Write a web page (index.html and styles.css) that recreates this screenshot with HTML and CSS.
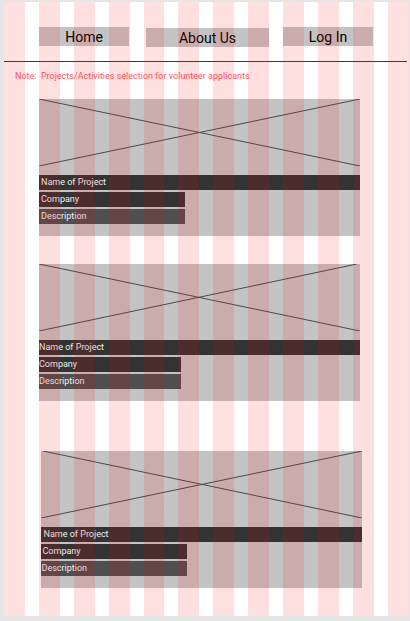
FILE: index.html
```
<!DOCTYPE html>
<html lang="en">
<head>
  <meta charset="UTF-8">
  <meta name="viewport" content="width=device-width, initial-scale=1.0">
  <title>Volunteer Projects - Wireframe</title>
  <link rel="stylesheet" href="styles.css">
</head>
<body>

<div class="frame">
  <nav class="nav">
    <a href="#" class="nav-btn">Home</a>
    <a href="#" class="nav-btn nav-about">About Us</a>
    <a href="#" class="nav-btn nav-login">Log In</a>
  </nav>

  <div class="rule"></div>

  <p class="note">Note:&nbsp; Projects/Activities selection for volunteer applicants</p>

  <div class="card card-1">
    <svg class="placeholder" viewBox="0 0 100 100" preserveAspectRatio="none">
      <line x1="0" y1="0" x2="100" y2="100" vector-effect="non-scaling-stroke"/>
      <line x1="0" y1="100" x2="100" y2="0" vector-effect="non-scaling-stroke"/>
    </svg>
    <div class="bar bar-name">Name of Project</div>
    <div class="bar bar-small">Company</div>
    <div class="bar bar-small bar-desc">Description</div>
  </div>

  <div class="card card-2">
    <svg class="placeholder" viewBox="0 0 100 100" preserveAspectRatio="none">
      <line x1="0" y1="0" x2="100" y2="100" vector-effect="non-scaling-stroke"/>
      <line x1="0" y1="100" x2="99" y2="0" vector-effect="non-scaling-stroke"/>
    </svg>
    <div class="bar bar-name">Name of Project</div>
    <div class="bar bar-small">Company</div>
    <div class="bar bar-small bar-desc">Description</div>
  </div>

  <div class="card card-3">
    <svg class="placeholder" viewBox="0 0 100 100" preserveAspectRatio="none">
      <line x1="0.6" y1="0" x2="100" y2="100" vector-effect="non-scaling-stroke"/>
      <line x1="0" y1="100" x2="100" y2="0" vector-effect="non-scaling-stroke"/>
    </svg>
    <div class="bar bar-name">Name of Project</div>
    <div class="bar bar-small">Company</div>
    <div class="bar bar-small bar-desc">Description</div>
  </div>
</div>

</body>
</html>
```

FILE: styles.css
```
:root {
  --page-bg: #e5e5e5;
  --grid-col: rgba(255, 0, 0, 0.12);
  --box-bg: #c4c4c4;
  --bar-dark: #333333;
  --bar-mid: #4f4f4f;
  --note-color: #ff5c5c;
}
* { margin: 0; padding: 0; box-sizing: border-box; }
body {
  background: var(--page-bg);
  font-family: 'Roboto', 'Liberation Sans', sans-serif;
  width: 410px;
  height: 621px;
  overflow: hidden;
}

/* artboard + column grid overlay */
.frame {
  position: relative;
  width: 405px;
  height: 614px;
  margin: 2px 0 0 4px;
  background: #fff;
  overflow: hidden;
}
.frame::after {
  content: '';
  position: absolute;
  inset: 0;
  pointer-events: none;
  background: repeating-linear-gradient(to right, var(--grid-col) 0 20.8px, transparent 20.8px 34.9px);
}

.nav { display: flex; align-items: flex-start; margin-top: 25px; padding-left: 35px; height: 20px; }
.nav-btn {
  display: flex;
  align-items: center;
  justify-content: center;
  width: 90px;
  height: 19px;
  background: var(--box-bg);
  color: #000;
  text-decoration: none;
  font-size: 14px;
}
.nav-about { width: 123px; margin: 1px 0 0 17px; }
.nav-login { margin-left: 14px; }

.rule { height: 1px; margin: 14px 2px 0 0; background: #3a3a3a; }

.note {
  margin-top: 9px;
  padding-left: 11px;
  font-size: 9px;
  line-height: 11px;
  color: var(--note-color);
}

.card {
  width: 321px;
  height: 137px;
  margin-left: 35px;
  background: var(--box-bg);
}
.card-1 { margin-top: 17px; }
.card-2 { margin-top: 28px; }
.card-3 { margin-top: 50px; margin-left: 37px; }

.placeholder { display: block; width: 100%; height: 67px; }
.placeholder line { stroke: #4a4a4a; stroke-width: 1; }

.bar {
  height: 15px;
  margin-top: 2px;
  padding-left: 2px;
  background: var(--bar-dark);
  color: #f0f0f0;
  font-size: 9px;
  line-height: 15px;
  white-space: nowrap;
}
.bar-name { margin-top: 9px; }
.bar-small { width: 146px; }
.bar-desc { background: var(--bar-mid); }

.card-2 .bar { padding-left: 0; }
.card-2 .bar-small { width: 142px; }
.card-3 .bar-name { padding-left: 2.5px; }
.card-3 .bar-small { padding-left: 1.5px; }
.card-3 .bar-desc { padding-left: 0.5px; }
```
